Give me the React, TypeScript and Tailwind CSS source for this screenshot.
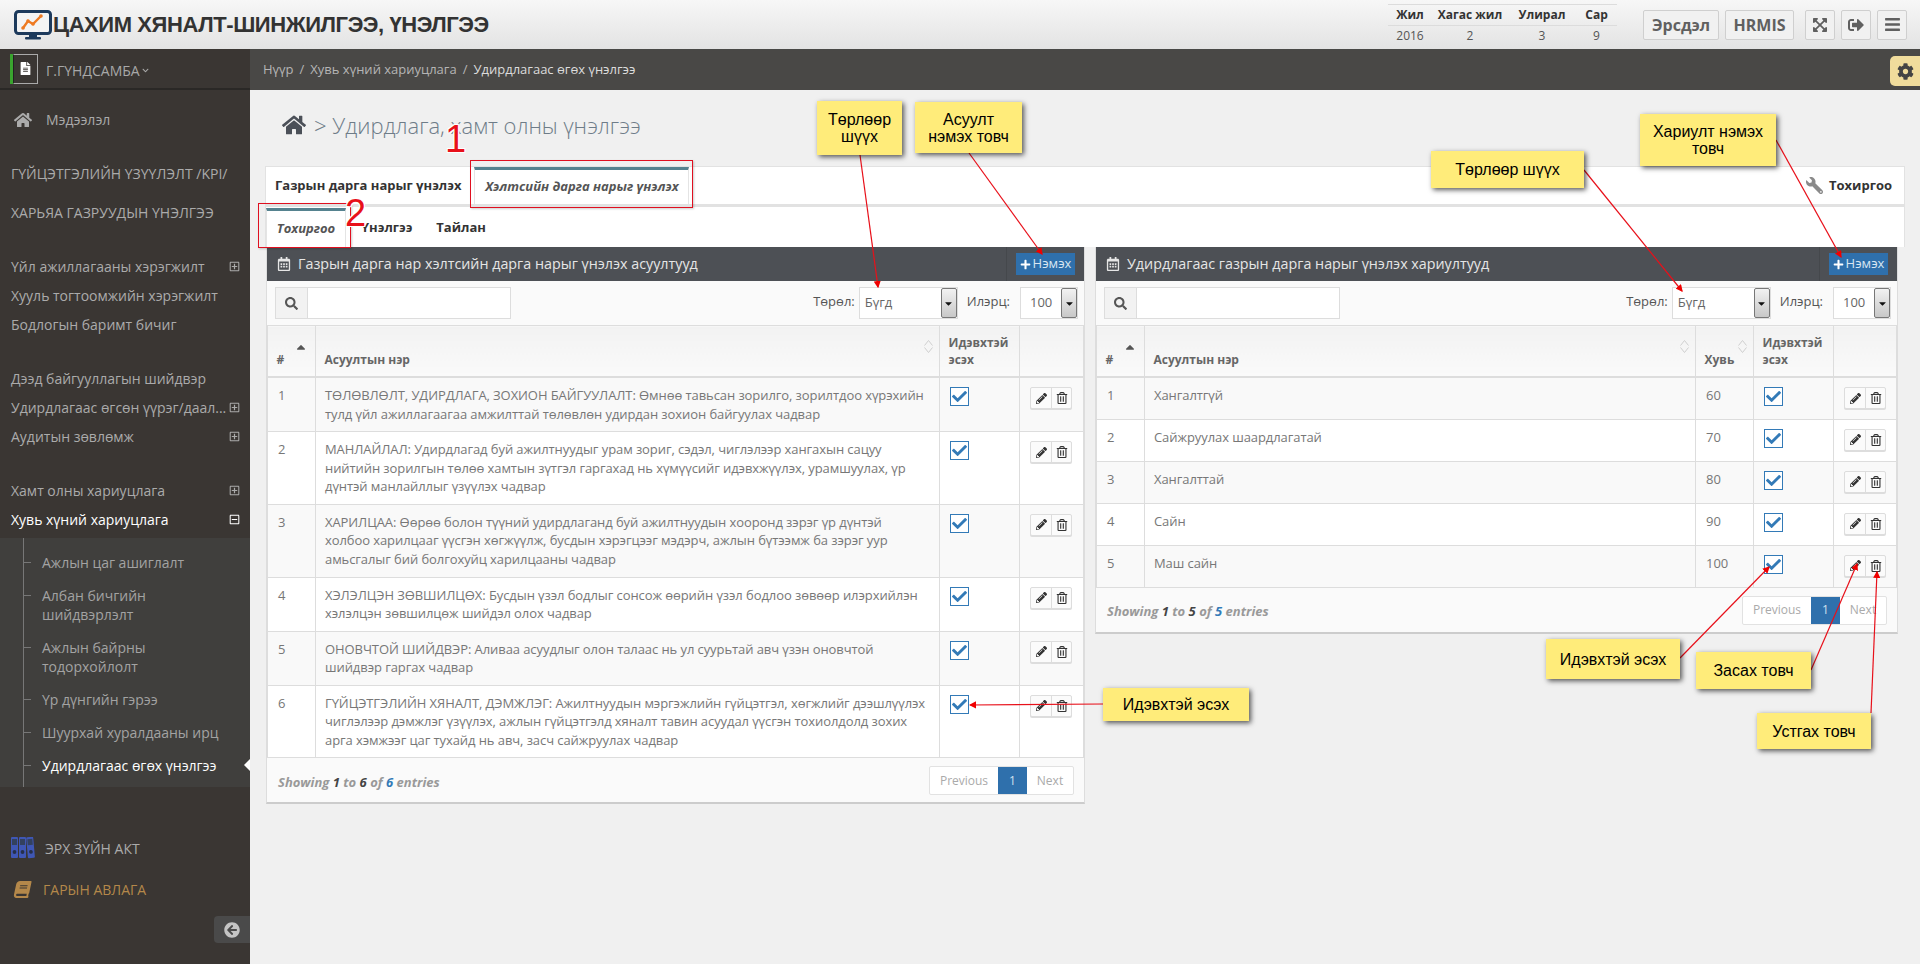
import React from "react";
import {
  FaHome, FaSearch, FaCog, FaSignOutAlt, FaBars, FaPlus, FaCheck, FaWrench, FaChevronDown,
  FaArrowCircleLeft, FaPencilAlt, FaRegTrashAlt, FaRegCalendarAlt, FaRegPlusSquare, FaRegMinusSquare,
  FaExpandArrowsAlt, FaBook, FaCaretDown, FaCaretUp, FaFileAlt,
} from "react-icons/fa";

const font = "font-['Open_Sans','Noto_Sans',sans-serif]";

function Logo() {
  return (
    <svg width="38" height="30" viewBox="0 0 38 30" className="shrink-0">
      <rect x="1.5" y="1.5" width="35" height="22" rx="3" fill="#f4f4f4" stroke="#1d3a5c" strokeWidth="3" />
      <rect x="15" y="24" width="8" height="3" fill="#1d3a5c" />
      <rect x="11" y="27" width="16" height="2.5" rx="1" fill="#1d3a5c" />
      <polyline points="9,18 14,11 19,14 27,6" fill="none" stroke="#ee7a22" strokeWidth="2.4" />
      <circle cx="9" cy="18" r="1.8" fill="#ee7a22" />
      <circle cx="14" cy="11" r="1.8" fill="#ee7a22" />
      <circle cx="19" cy="14" r="1.8" fill="#ee7a22" />
      <circle cx="27" cy="6" r="1.8" fill="#ee7a22" />
    </svg>
  );
}

function Binders() {
  return (
    <svg width="25" height="22" viewBox="0 0 25 22" className="shrink-0">
      {[0, 8, 16].map((x, i) => (
        <g key={x} transform={i === 2 ? `rotate(-5 ${x + 3} 10) translate(${x} 0)` : `translate(${x} 0)`}>
          <rect x="0" y="0" width="7" height="21" rx="1" fill="#3f57b5" />
          <rect x="1" y="2" width="5" height="6" fill="#33415f" />
          <circle cx="3.5" cy="15" r="1.9" fill="#26304c" />
        </g>
      ))}
    </svg>
  );
}

function TopBar() {
  const btn = "h-[30px] border border-[#cfcfcf] rounded-[2px] bg-[#f1f1f1] flex items-center justify-center text-[#606060]";
  return (
    <header className="h-[49px] shrink-0 flex items-center bg-gradient-to-b from-[#f7f7f7] to-[#e3e3e3]">
      <div className="ml-[14px] flex items-center gap-[1px]">
        <Logo />
        <h1 className="font-['Liberation_Sans',sans-serif] text-[22px] font-bold text-[#333] whitespace-nowrap tracking-[-0.42px]">
          ЦАХИМ ХЯНАЛТ-ШИНЖИЛГЭЭ, ҮНЭЛГЭЭ
        </h1>
      </div>
      <div className="ml-auto w-[229px] text-center text-[12px] leading-[20px] text-[#555]">
        <div className="grid grid-cols-[44px_76px_68px_41px] border-y border-[#dcdcdc] font-bold text-[#333]">
          <span>Жил</span><span className="whitespace-nowrap">Хагас жил</span><span>Улирал</span><span>Сар</span>
        </div>
        <div className="grid grid-cols-[44px_76px_68px_41px]">
          <span>2016</span><span>2</span><span>3</span><span>9</span>
        </div>
      </div>
      <div className="ml-[26px] mr-[13px] flex items-center">
        <div className={`${btn} w-[76px] text-[16px] font-bold`}>Эрсдэл</div>
        <div className={`${btn} w-[69px] ml-[6px] text-[16px] font-bold`}>HRMIS</div>
        <div className={`${btn} w-[30px] ml-[11px] text-[16px]`}><FaExpandArrowsAlt /></div>
        <div className={`${btn} w-[30px] ml-[6px] text-[16px]`}><FaSignOutAlt /></div>
        <div className={`${btn} w-[30px] ml-[6px] text-[17px]`}><FaBars /></div>
      </div>
    </header>
  );
}

function SideRow({ label, h = "h-[29px]", sign, active }: { label: string; h?: string; sign?: "plus" | "minus"; active?: boolean }) {
  return (
    <div className={`${h} pl-[11px] pr-[10px] flex items-center justify-between ${active ? "text-white" : "text-[#ababab]"}`}>
      <span className="whitespace-nowrap">{label}</span>
      {sign === "plus" && <FaRegPlusSquare className="text-[11px] shrink-0" />}
      {sign === "minus" && <FaRegMinusSquare className="text-[11px] shrink-0" />}
    </div>
  );
}

function SubRow({ lines, active }: { lines: string[]; active?: boolean }) {
  return (
    <div className={`relative pl-[42px] py-[7px] leading-[19px] ${active ? "text-white" : "text-[#a3a3a3]"}`}>
      <span className="absolute left-[23px] top-[16px] w-[8px] h-px bg-[#777]" />
      {lines.map((l) => <div key={l} className="whitespace-nowrap">{l}</div>)}
      {active && <span className="absolute right-0 top-[10px] w-0 h-0 border-y-[6px] border-y-transparent border-r-[6px] border-r-white" />}
    </div>
  );
}

function Sidebar() {
  return (
    <aside className="w-[250px] shrink-0 bg-[#3a3633] text-[14px] relative">
      <div className="h-[41px] border-b-2 border-[#2a2826] flex items-center pl-[10px]">
        <div className="w-[3px] h-[30px] bg-[#3aa42f]" />
        <div className="w-[25px] h-[30px] border border-[#aaa] border-l-[#222] flex items-center justify-center text-white">
          <FaFileAlt className="text-[13px]" />
        </div>
        <span className="ml-[8px] mt-[4px] text-[#a8a8a8]">Г.ГҮНДСАМБА</span>
        <FaChevronDown className="ml-[2px] mt-[4px] text-[7px] text-[#a8a8a8]" />
      </div>
      <div className="mt-[15px] h-[29px] pl-[14px] flex items-center text-[#ababab]">
        <FaHome className="text-[18px]" />
        <span className="ml-[14px] text-[#ababab]">Мэдээлэл</span>
      </div>
      <div className="mt-[20px]">
        <SideRow h="h-[39px]" label="ГҮЙЦЭТГЭЛИЙН ҮЗҮҮЛЭЛТ /KPI/" />
        <SideRow h="h-[39px]" label="ХАРЬЯА ГАЗРУУДЫН ҮНЭЛГЭЭ" />
      </div>
      <div className="mt-[20px]">
        <SideRow label="Үйл ажиллагааны хэрэгжилт" sign="plus" />
        <SideRow label="Хууль тогтоомжийн хэрэгжилт" />
        <SideRow label="Бодлогын баримт бичиг" />
      </div>
      <div className="mt-[25px]">
        <SideRow label="Дээд байгууллагын шийдвэр" />
        <SideRow label="Удирдлагаас өгсөн үүрэг/даал..." sign="plus" />
        <SideRow label="Аудитын зөвлөмж" sign="plus" />
      </div>
      <div className="mt-[25px]">
        <SideRow label="Хамт олны хариуцлага" sign="plus" />
        <SideRow label="Хувь хүний хариуцлага" sign="minus" active />
      </div>
      <div className="mt-[4px] h-[249px] bg-[#403f3d] relative pt-[8px]">
        <span className="absolute left-[23px] top-0 bottom-0 w-px bg-[#777]" />
        <SubRow lines={["Ажлын цаг ашиглалт"]} />
        <SubRow lines={["Албан бичгийн", "шийдвэрлэлт"]} />
        <SubRow lines={["Ажлын байрны", "тодорхойлолт"]} />
        <SubRow lines={["Үр дүнгийн гэрээ"]} />
        <SubRow lines={["Шуурхай хуралдааны ирц"]} />
        <SubRow lines={["Удирдлагаас өгөх үнэлгээ"]} active />
      </div>
      <div className="mt-[44px] h-[34px] pl-[11px] flex items-center text-[#ababab]">
        <Binders />
        <span className="ml-[9px]">ЭРХ ЗҮЙН АКТ</span>
      </div>
      <div className="mt-[7px] h-[34px] pl-[14px] flex items-center text-[#b4884a]">
        <FaBook className="text-[17px] -skew-x-12" />
        <span className="ml-[12px]">ГАРЫН АВЛАГА</span>
      </div>
      <div className="absolute left-[214px] top-[867px] w-[36px] h-[27px] rounded-l-[4px] bg-[#4a4a4a] flex items-center justify-center text-[#c4c4c4]">
        <FaArrowCircleLeft className="text-[16px]" />
      </div>
    </aside>
  );
}

function Tab({ label, active, w }: { label: string; active?: boolean; w?: string }) {
  return active ? (
    <div className={`${w} h-full border-t-[3px] border-t-[#55828f] border-x border-x-[#e4e4e4] flex items-center justify-center italic font-bold text-[#555]`}>
      {label}
    </div>
  ) : (
    <div className="font-bold text-[#333] whitespace-nowrap">{label}</div>
  );
}

function FakeSelect({ value, w, tw }: { value: string; w: string; tw: string }) {
  return (
    <div className={`${w} h-[32px] border border-[#ddd] bg-white flex items-stretch text-[13px] text-[#666]`}>
      <span className={`flex-1 ${tw} flex items-center`}>{value}</span>
      <span className="w-[16px] border border-[#777] rounded-[2px] bg-gradient-to-b from-[#f2f2f2] to-[#c8c8c8] flex items-center justify-center text-[#111]">
        <FaCaretDown className="text-[11px]" />
      </span>
    </div>
  );
}

function SortPair() {
  return (
    <span className="absolute right-[6px] top-[14px] flex flex-col gap-[1px] text-[#cfcfcf]">
      <svg width="9" height="6" viewBox="0 0 9 6"><polyline points="0.5,5.5 4.5,0.5 8.5,5.5" fill="none" stroke="currentColor" /></svg>
      <svg width="9" height="6" viewBox="0 0 9 6"><polyline points="0.5,0.5 4.5,5.5 8.5,0.5" fill="none" stroke="currentColor" /></svg>
    </span>
  );
}

const th = "relative border border-[#ddd] border-b-2 align-bottom px-[8.5px] py-[8px] text-left text-[12px] font-bold leading-[17px] text-[#666] bg-gradient-to-b from-[#f2f2f2] to-[#fafafa]";
const td = "border border-[#ddd] align-top px-[10px] py-[8px] text-[13px] leading-[18.57px] text-[#777]";
const tdName = "border border-[#ddd] align-top pl-[9px] pr-[2px] py-[8px] text-[13px] leading-[18.57px] tracking-[-0.08px] text-[#777] whitespace-nowrap";

function Actions() {
  return (
    <div className="flex w-[42px] h-[22px] mt-px border border-[#ddd] rounded-[2px] bg-[#fbfbfb] text-[#333] text-[11px] shadow-[0_1px_0_#ddd]">
      <span className="w-[21px] flex items-center justify-center border-r border-[#ddd]"><FaPencilAlt /></span>
      <span className="flex-1 flex items-center justify-center text-[12px]"><FaRegTrashAlt /></span>
    </div>
  );
}

function Check() {
  return (
    <div className="w-[19px] h-[19px] mt-px border border-[#337ab7] bg-white flex items-center justify-center text-[#337ab7] text-[15px]">
      <FaCheck />
    </div>
  );
}

function Panel({
  width, title, children, info,
}: {
  width: string; title: string; children: React.ReactNode; info: [string, string, string];
}) {
  return (
    <section className={`${width} bg-white border border-t-0 border-[#ddd] border-b-2 border-b-[#ccc]`}>
      <div className="h-[34px] bg-[#4d5055] flex items-center pl-[10px] text-[14.3px] text-[#e6e6e6]">
        <FaRegCalendarAlt className="text-[14px] shrink-0" />
        <span className="ml-[7px] whitespace-nowrap">{title}</span>
        <div className="ml-auto h-full border-l border-[#45484c] pl-[9px] pr-[9px] flex items-center">
          <div className="w-[59px] h-[22px] bg-[#2f70ac] text-[#d8e6f2] text-[13px] flex items-center justify-center gap-[2px]">
            <FaPlus className="text-[11px] text-white" /> Нэмэх
          </div>
        </div>
      </div>
      <div className="h-[44px] bg-[#fafafa] flex items-center pl-[8px] pr-[6px] text-[13px] text-[#555]">
        <div className="w-[236px] h-[32px] flex border border-[#ddd] bg-white">
          <span className="w-[32px] bg-[#f2f2f2] border-r border-[#ddd] flex items-center justify-center text-[#555] text-[13px]"><FaSearch /></span>
        </div>
        <span className="ml-auto mb-[3px]">Төрөл:</span>
        <div className="ml-[4px]"><FakeSelect value="Бүгд" w="w-[99px]" tw="pl-[5px]" /></div>
        <span className="ml-[9px] mb-[3px]">Илэрц:</span>
        <div className="ml-[10px]"><FakeSelect value="100" w="w-[58px]" tw="pl-[9px]" /></div>
      </div>
      {children}
      <div className="flex items-center pl-[11px] pr-[10px] bg-[#fafafa] h-[44px]">
        <span className="mt-[4px] text-[13px] italic font-bold text-[#999]">
          Showing <span className="text-[#444]">{info[0]}</span> to <span className="text-[#444]">{info[1]}</span> of{" "}
          <span className="text-[#337ab7]">{info[2]}</span> entries
        </span>
        <div className="ml-auto mt-[1px] h-[29px] flex border border-[#e2e2e2] rounded-[2px] bg-white text-[12px] text-[#aaa]">
          <span className="w-[68px] flex items-center justify-center">Previous</span>
          <span className="w-[29px] flex items-center justify-center bg-[#2f70ac] text-[#cfe0ef]">1</span>
          <span className="w-[46px] flex items-center justify-center">Next</span>
        </div>
      </div>
    </section>
  );
}

const leftRows: React.ReactNode[] = [
  <>ТӨЛӨВЛӨЛТ, УДИРДЛАГА, ЗОХИОН БАЙГУУЛАЛТ: Өмнөө тавьсан зорилго, зорилтдоо хүрэхийн<br />тулд үйл ажиллагаагаа амжилттай төлөвлөн удирдан зохион байгуулах чадвар</>,
  <>МАНЛАЙЛАЛ: Удирдлагад буй ажилтнуудыг урам зориг, сэдэл, чиглэлээр хангахын сацуу<br />нийтийн зорилгын төлөө хамтын зүтгэл гаргахад нь хүмүүсийг идэвхжүүлэх, урамшуулах, үр<br />дүнтэй манлайллыг үзүүлэх чадвар</>,
  <>ХАРИЛЦАА: Өөрөө болон түүний удирдлаганд буй ажилтнуудын хооронд зэрэг үр дүнтэй<br />холбоо харилцааг үүсгэн хөгжүүлж, бусдын хэрэгцээг мэдэрч, ажлын бүтээмж ба зэрэг уур<br />амьсгалыг бий болгохуйц харилцааны чадвар</>,
  <>ХЭЛЭЛЦЭН ЗӨВШИЛЦӨХ: Бусдын үзэл бодлыг сонсож өөрийн үзэл бодлоо зөвөөр илэрхийлэн<br />хэлэлцэн зөвшилцөж шийдэл олох чадвар</>,
  <>ОНОВЧТОЙ ШИЙДВЭР: Аливаа асуудлыг олон талаас нь ул суурьтай авч үзэн оновчтой<br />шийдвэр гаргах чадвар</>,
  <>ГҮЙЦЭТГЭЛИЙН ХЯНАЛТ, ДЭМЖЛЭГ: Ажилтнуудын мэргэжлийн гүйцэтгэл, хөгжлийг дээшлүүлэх<br />чиглэлээр дэмжлэг үзүүлэх, ажлын гүйцэтгэлд хяналт тавин асуудал үүсгэн тохиолдолд зохих<br />арга хэмжээг цаг тухайд нь авч, засч сайжруулах чадвар</>,
];

const rightRows: [string, string][] = [
  ["Хангалтгүй", "60"],
  ["Сайжруулах шаардлагатай", "70"],
  ["Хангалттай", "80"],
  ["Сайн", "90"],
  ["Маш сайн", "100"],
];

function LeftTable() {
  return (
    <table className="w-full table-fixed border-collapse">
      <colgroup>
        <col className="w-[48px]" /><col /><col className="w-[80px]" /><col className="w-[64px]" />
      </colgroup>
      <thead>
        <tr>
          <th className={th}>#<FaCaretUp className="absolute right-[7px] top-[14px] text-[14px] text-[#555]" /></th>
          <th className={th}>Асуултын нэр<SortPair /></th>
          <th className={th}>Идэвхтэй эсэх</th>
          <th className={th}></th>
        </tr>
      </thead>
      <tbody>
        {leftRows.map((r, i) => (
          <tr key={i} className={i % 2 === 0 ? "bg-[#f9f9f9]" : "bg-white"}>
            <td className={td}>{i + 1}</td>
            <td className={tdName}>{r}</td>
            <td className={td}><Check /></td>
            <td className={td}><Actions /></td>
          </tr>
        ))}
      </tbody>
    </table>
  );
}

function RightTable() {
  return (
    <table className="w-full table-fixed border-collapse">
      <colgroup>
        <col className="w-[48px]" /><col /><col className="w-[58px]" /><col className="w-[80px]" /><col className="w-[63px]" />
      </colgroup>
      <thead>
        <tr>
          <th className={th}>#<FaCaretUp className="absolute right-[7px] top-[14px] text-[14px] text-[#555]" /></th>
          <th className={th}>Асуултын нэр<SortPair /></th>
          <th className={th}>Хувь<SortPair /></th>
          <th className={th}>Идэвхтэй эсэх</th>
          <th className={th}></th>
        </tr>
      </thead>
      <tbody>
        {rightRows.map(([name, pct], i) => (
          <tr key={name} className={`h-[42px] ${i % 2 === 0 ? "bg-[#f9f9f9]" : "bg-white"}`}>
            <td className={td}>{i + 1}</td>
            <td className={tdName}>{name}</td>
            <td className={td}>{pct}</td>
            <td className={td}><Check /></td>
            <td className={td}><Actions /></td>
          </tr>
        ))}
      </tbody>
    </table>
  );
}

function Note({ cls, children }: { cls: string; children: React.ReactNode }) {
  return (
    <div className={`absolute ${cls} bg-[#ffec7a] shadow-[2px_2px_5px_rgba(0,0,0,0.65)] flex items-center justify-center text-center font-['Liberation_Sans',sans-serif] text-[16px] leading-[17px] text-black`}>
      <span>{children}</span>
    </div>
  );
}

function Annotations() {
  const arrows: [number, number, number, number][] = [
    [860, 155, 878, 287],
    [969, 153, 1042, 254],
    [1584, 170, 1682, 291],
    [1776, 140, 1841, 257],
    [1103, 704, 970, 705],
    [1680, 658, 1769, 567],
    [1811, 670, 1857, 564],
    [1871, 713, 1877, 572],
  ];
  return (
    <>
      <svg className="absolute left-0 top-0 z-10 pointer-events-none" width="1920" height="964">
        <defs>
          <marker id="ah" markerWidth="6" markerHeight="6" refX="5" refY="3" orient="auto">
            <path d="M0,0 L6,3 L0,6 z" fill="#f00000" />
          </marker>
        </defs>
        {arrows.map(([a, b, c, d]) => (
          <line key={`${a}-${b}`} x1={a} y1={b} x2={c} y2={d} stroke="#e8101a" strokeWidth="1.2" markerEnd="url(#ah)" />
        ))}
      </svg>
      <div className="absolute left-[470px] top-[160px] w-[223px] h-[48px] border border-[#e01020] z-10 shadow-[1px_1px_2px_rgba(0,0,0,0.2)]" />
      <div className="absolute left-[258px] top-[203px] w-[93px] h-[45px] border border-[#e01020] z-10 shadow-[1px_1px_2px_rgba(0,0,0,0.2)]" />
      <div className="absolute left-[445px] top-[117px] z-10 font-['Liberation_Sans',sans-serif] text-[38px] leading-[44px] text-[#e8101a] [text-shadow:1px_1px_0_#fff,-1px_-1px_0_#fff,1px_-1px_0_#fff,-1px_1px_0_#fff]">1</div>
      <div className="absolute left-[345px] top-[191px] z-10 font-['Liberation_Sans',sans-serif] text-[38px] leading-[44px] text-[#e8101a] [text-shadow:1px_1px_0_#fff,-1px_-1px_0_#fff,1px_-1px_0_#fff,-1px_1px_0_#fff]">2</div>
      <div className="contents [&>div]:z-20">
        <Note cls="left-[817px] top-[101px] w-[85px] h-[54px]">Төрлөөр<br />шүүх</Note>
        <Note cls="left-[915px] top-[102px] w-[107px] h-[51px]">Асуулт<br />нэмэх товч</Note>
        <Note cls="left-[1431px] top-[151px] w-[153px] h-[37px]">Төрлөөр шүүх</Note>
        <Note cls="left-[1640px] top-[114px] w-[136px] h-[52px]">Хариулт нэмэх<br />товч</Note>
        <Note cls="left-[1103px] top-[688px] w-[146px] h-[33px]">Идэвхтэй эсэх</Note>
        <Note cls="left-[1546px] top-[639px] w-[134px] h-[40px]">Идэвхтэй эсэх</Note>
        <Note cls="left-[1696px] top-[652px] w-[115px] h-[37px]">Засах товч</Note>
        <Note cls="left-[1757px] top-[713px] w-[114px] h-[36px]">Устгах товч</Note>
      </div>
    </>
  );
}

export default function App() {
  return (
    <div className={`relative w-[1920px] h-[964px] overflow-hidden flex flex-col ${font} bg-[#f0f0f0]`}>
      <TopBar />
      <div className="flex flex-1 min-h-0">
        <Sidebar />
        <main className="flex-1 min-w-0 relative">
          <div className="h-[41px] bg-[#494846] flex items-center pl-[13px] text-[13px] text-[#b5b5b5]">
            <span>Нүүр</span>
            <span className="mx-[6px]">/</span>
            <span>Хувь хүний хариуцлага</span>
            <span className="mx-[6px]">/</span>
            <span className="text-[#dcdcdc]">Удирдлагаас өгөх үнэлгээ</span>
            <div className="ml-auto mt-[3px] w-[30px] h-[30px] rounded-l-[5px] bg-[#f0dc9c] flex items-center justify-center text-[#444] text-[17px]">
              <FaCog />
            </div>
          </div>
          <div className="pl-[32px] h-[76px] pb-[6px] flex items-center text-[#6e7c88]">
            <FaHome className="text-[24px] text-[#4b5058]" />
            <span className="ml-[8px] text-[22px] font-light whitespace-nowrap">&gt; Удирдлага, хамт олны үнэлгээ</span>
          </div>
          <div className="ml-[15px] mr-[15px] text-[13px]">
            <div className="h-[41px] bg-white border border-[#e2e2e2] border-b-[3px] flex items-center pl-[9px] pr-[12px]">
              <Tab label="Газрын дарга нарыг үнэлэх" />
              <div className="ml-[13px] h-full"><Tab label="Хэлтсийн дарга нарыг үнэлэх" active w="w-[215px]" /></div>
              <div className="ml-auto flex items-center gap-[6px] font-bold text-[#333]">
                <FaWrench className="text-[#8a8a8a] text-[17px] -scale-x-100" /> Тохиргоо
              </div>
            </div>
            <div className="h-[40px] bg-white border-x border-[#e2e2e2] flex items-center pt-[1px]">
              <Tab label="Тохиргоо" active w="w-[80px]" />
              <span className="ml-[15px] font-bold text-[#333]">Үнэлгээ</span>
              <span className="ml-[24px] font-bold text-[#333]">Тайлан</span>
            </div>
          </div>
          <div className="ml-[16px] flex items-start gap-[10px]">
            <Panel width="w-[819px]" title="Газрын дарга нар хэлтсийн дарга нарыг үнэлэх асуултууд" info={["1", "6", "6"]}>
              <LeftTable />
            </Panel>
            <Panel width="w-[803px]" title="Удирдлагаас газрын дарга нарыг үнэлэх хариултууд" info={["1", "5", "5"]}>
              <RightTable />
            </Panel>
          </div>
        </main>
      </div>
      <Annotations />
    </div>
  );
}
